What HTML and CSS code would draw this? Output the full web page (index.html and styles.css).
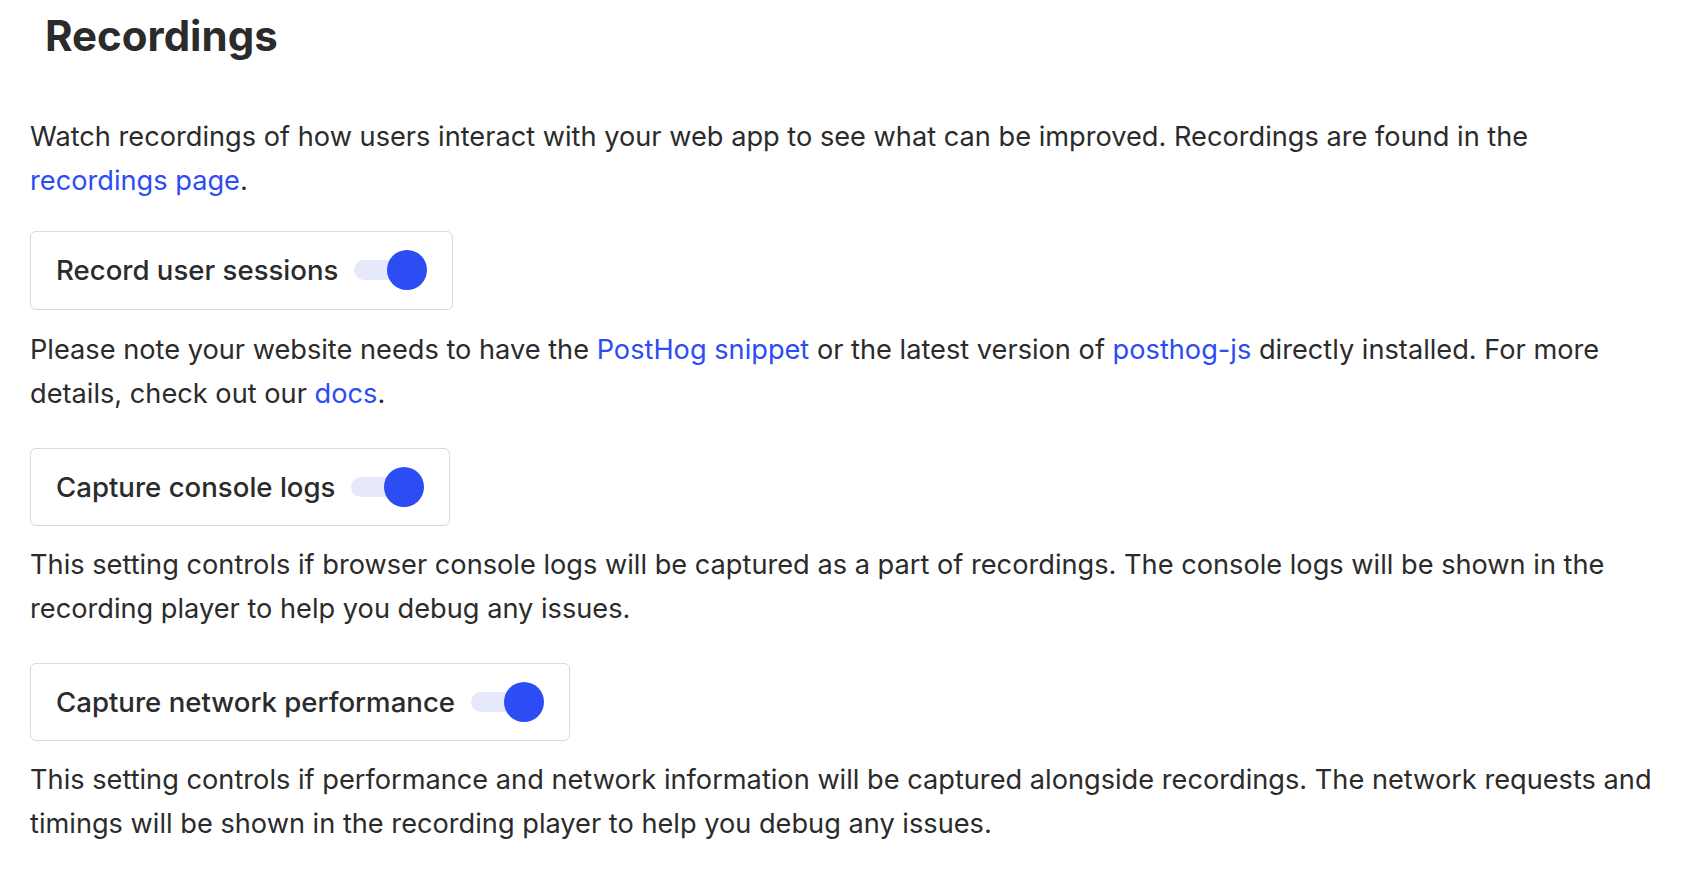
FILE: index.html
```html
<!DOCTYPE html>
<html lang="en">
<head>
<meta charset="utf-8">
<title>Recordings</title>
<link rel="stylesheet" href="styles.css">
</head>
<body>
<main class="page">
  <h1 class="title">Recordings</h1>
  <p class="text">Watch recordings of how users interact with your web app to see what can be improved. Recordings are found in the <a class="link" href="#">recordings page</a>.</p>

  <div class="setting setting-first">
    <span class="setting-label">Record user sessions</span>
    <span class="switch"><span class="switch-track"></span><span class="switch-knob"></span></span>
  </div>
  <p class="text">Please note your website needs to have the <a class="link" href="#">PostHog snippet</a> or the latest version of <a class="link" href="#">posthog-js</a> directly installed. For more details, check out our <a class="link" href="#">docs</a>.</p>

  <div class="setting">
    <span class="setting-label">Capture console logs</span>
    <span class="switch"><span class="switch-track"></span><span class="switch-knob"></span></span>
  </div>
  <p class="text">This setting controls if browser console logs will be captured as a part of recordings. The console logs will be shown in the recording player to help you debug any issues.</p>

  <div class="setting">
    <span class="setting-label">Capture network performance</span>
    <span class="switch"><span class="switch-track"></span><span class="switch-knob"></span></span>
  </div>
  <p class="text">This setting controls if performance and network information will be captured alongside recordings. The network requests and timings will be shown in the recording player to help you debug any issues.</p>
</main>
</body>
</html>
```

FILE: styles.css
```css
html, body {
  margin: 0;
  padding: 0;
  background: #ffffff;
}

body {
  font-family: Inter, "Noto Sans", "Liberation Sans", sans-serif;
  color: #2b2b2b;
}

.page {
  padding: 12px 30px 0 30px;
}

.title {
  margin: 0 0 55px 15px;
  font-size: 42px;
  line-height: 48px;
  font-weight: 700;
  color: #2b2b2b;
}

.text {
  margin: 0;
  font-size: 27.2px;
  line-height: 44px;
  font-weight: 400;
}

.link {
  color: #2c4cf4;
  text-decoration: none;
}

.setting {
  display: flex;
  align-items: center;
  gap: 16px;
  width: fit-content;
  margin: 32px 0 17px 0;
  padding: 18px 25px;
  border: 1px solid #d9d9d9;
  border-radius: 6px;
}

.setting-first {
  margin-top: 28px;
  margin-bottom: 18px;
  padding-bottom: 19px;
}

.setting-label {
  font-size: 27.6px;
  line-height: 32px;
  font-weight: 500;
}

.switch {
  position: relative;
  display: block;
  width: 73px;
  height: 40px;
}

.switch-track {
  position: absolute;
  left: 0;
  top: 10px;
  width: 66px;
  height: 20px;
  border-radius: 10px;
  background: #e6e9fc;
}

.switch-knob {
  position: absolute;
  right: 0;
  top: 0;
  width: 40px;
  height: 40px;
  border-radius: 50%;
  background: #2c4cf4;
}
```
